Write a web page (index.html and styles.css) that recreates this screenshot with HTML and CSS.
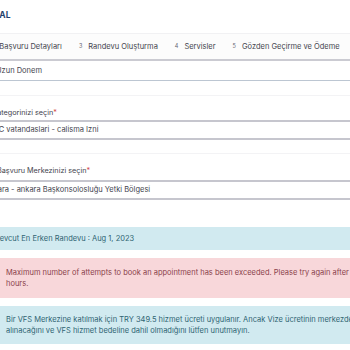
FILE: index.html
```html
<!DOCTYPE html>
<html lang="tr">
  <head>
    <meta charset="UTF-8" />
    <meta name="viewport" content="width=device-width, initial-scale=1.0" />
    <title>Randevu Al</title>
    <link rel="stylesheet" href="styles.css">
  </head>
  <body>
    <div class="page">
      <h1 class="page-title">RANDEVU AL</h1>
      <div class="steps">
        <div class="step"><span class="step-num">2</span><span>Başvuru Detayları</span></div>
        <div class="step"><span class="step-num">3</span><span>Randevu Oluşturma</span></div>
        <div class="step"><span class="step-num">4</span><span>Servisler</span></div>
        <div class="step"><span class="step-num">5</span><span>Gözden Geçirme ve Ödeme</span></div>
      </div>
      <div class="field field-plain">Uzun Donem</div>
      <div class="form-group">
        <label class="form-label label-category">Alt Kategorinizi seçin<span class="req">*</span></label>
        <div class="field field-select">KKTC vatandaslari - calisma Izni</div>
      </div>
      <div class="form-group">
        <label class="form-label label-center">Başvuru Merkezinizi seçin<span class="req">*</span></label>
        <div class="field field-select">Ankara - ankara Başkonsolosluğu Yetki Bölgesi</div>
      </div>
      <div class="alert alert-info alert-slim">Mevcut En Erken Randevu : Aug 1, 2023</div>
      <div class="alert alert-danger">Maximum number of attempts to book an appointment has been exceeded. Please try again after 2 hours.</div>
      <div class="alert alert-info">Bir VFS Merkezine katılmak için TRY 349.5 hizmet ücreti uygulanır. Ancak Vize ücretinin merkezde alınacağını ve VFS hizmet bedeline dahil olmadığını lütfen unutmayın.</div>
    </div>
  </body>
</html>
```

FILE: styles.css
```css
body {
  margin: 0;
  font-family: Inter, "Noto Sans", sans-serif;
  font-size: 7.5px;
  line-height: 11px;
  color: #44444e;
  background-color: #ffffff;
  overflow: hidden;
}

.page {
  width: 404px;
  margin-left: -14px;
}

.page-title {
  margin: 0;
  padding-top: 10px;
  padding-left: 14px;
  height: 11px;
  font-size: 8.5px;
  font-weight: 700;
  color: #1f3f6e;
  text-indent: -45px;
  white-space: nowrap;
}

.steps {
  display: flex;
  align-items: center;
  gap: 17px;
  margin-top: 12px;
  height: 25px;
  padding-left: 4px;
  background-color: #fcfcfc;
  border-top: 1px solid #f1f1f3;
  border-bottom: 2px solid #cbcbd2;
  font-size: 7.5px;
  white-space: nowrap;
}

.step {
  display: flex;
  align-items: center;
  gap: 6px;
}

.step-num {
  font-size: 5.5px;
  color: #666670;
}

.field {
  height: 19px;
  line-height: 19px;
  white-space: nowrap;
}

.field-plain {
  padding-left: 10px;
  border-bottom: 1px solid #bcc6d2;
}

.form-group {
  margin-top: 14px;
  padding-top: 11px;
  border-top: 1px solid #f3f3f5;
}

.form-group + .form-group {
  margin-top: 13px;
}

.form-label {
  display: block;
  height: 12px;
  line-height: 12px;
  margin-bottom: 1px;
  font-size: 7.25px;
  white-space: nowrap;
}

.form-group + .form-group .form-label {
  margin-bottom: 3px;
}

.label-category {
  text-indent: -5px;
}

.label-center {
  padding-left: 11px;
}

.req {
  color: #d33a3a;
}

.field-select {
  height: 16px;
  line-height: 16px;
  text-indent: -2px;
  border-top: 2px solid #c6c6ce;
  border-bottom: 2px solid #c6c6ce;
}

.alert {
  padding: 8px 20px;
  margin-bottom: 8px;
  line-height: 11px;
}

.alert-info {
  background-color: #d1eaf0;
  color: #2f6472;
}

.alert-danger {
  background-color: #f8d7da;
  color: #8a3f4a;
  padding-top: 9px;
  padding-bottom: 9px;
}

.alert-slim {
  margin-top: 27px;
  padding: 6px 0 6px 7px;
}
```
